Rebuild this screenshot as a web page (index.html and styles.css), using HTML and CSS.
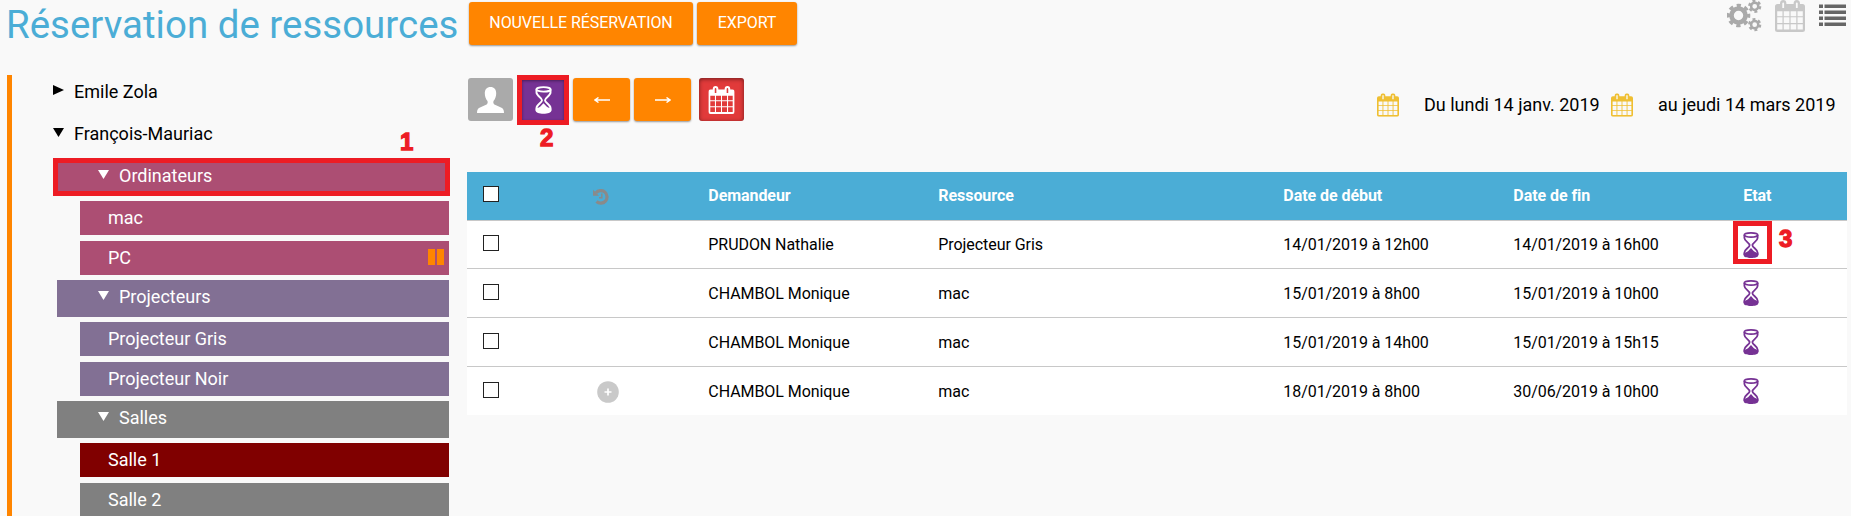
FILE: index.html
```html
<!DOCTYPE html>
<html lang="fr">
<head>
<meta charset="utf-8">
<title>Réservation de ressources</title>
<link rel="stylesheet" href="styles.css">
</head>
<body>
<svg class="defs" aria-hidden="true">
  <symbol id="calendar" viewBox="0 0 30 32">
    <path fill="currentColor" fill-rule="evenodd" d="M2.500 4H5V3.500a3.200 3.500 0 0 1 6.400 0V4h7.200V3.500a3.200 3.500 0 0 1 6.400 0V4h2.500A2.500 2.500 0 0 1 30 6.500v23a2.500 2.500 0 0 1-2.500 2.500h-25A2.500 2.500 0 0 1 0 29.500v-23A2.500 2.500 0 0 1 2.500 4zM7.300 3.300V8h1.800V3.300a.9.900 0 0 0-1.800 0zM20.900 3.300V8h1.800V3.300a.9.900 0 0 0-1.800 0zM2.200 11.200v5h5.300v-5zM8.700 11.200v5h5.700v-5zM15.600 11.200v5h5.700v-5zM22.500 11.200v5h5.300v-5zM2.200 17.300v5.700h5.300v-5.700zM8.700 17.300v5.700h5.700v-5.700zM15.600 17.300v5.700h5.700v-5.700zM22.500 17.300v5.700h5.300v-5.700zM2.200 24.200v5.400h5.300v-5.400zM8.700 24.200v5.400h5.700v-5.400zM15.600 24.200v5.400h5.700v-5.400zM22.500 24.200v5.400h5.300v-5.400z"/>
  </symbol>
  <symbol id="hourglass" viewBox="0 0 16 26">
    <g fill="none" stroke="currentColor" stroke-width="1.800">
      <ellipse cx="8" cy="3" rx="6.700" ry="2.100"/>
      <path d="M1.400 3v3c0 3 5.200 5 5.200 7.200S1.400 17.500 1.400 20.500V23M14.600 3v3c0 3-5.200 5-5.200 7.200s5.200 4.300 5.200 7.300V23"/>
    </g>
    <path fill="currentColor" d="M.7 21c1.800-.3 4.300-1.300 5.500-3L8 16l1.800 2c1.200 1.700 3.700 2.700 5.500 3v2.200C15.300 25 12 26 8 26S.7 25 .7 23.200z"/>
  </symbol>
</svg>

<header class="top">
  <h1 class="title">Réservation de ressources</h1>
  <button class="btn btn-new">NOUVELLE RÉSERVATION</button>
  <button class="btn btn-export">EXPORT</button>
  <nav class="views">
    <svg class="gears" viewBox="0 0 35 32" fill="none" stroke="currentColor">
      <circle cx="11.500" cy="15.500" r="7" stroke-width="4.600"/>
      <circle cx="11.500" cy="15.500" r="10" stroke-width="3.600" stroke-dasharray="4.200 3.654" stroke-dashoffset="2.100"/>
      <circle cx="27.700" cy="6.300" r="3.600" stroke-width="2.500"/>
      <circle cx="27.700" cy="6.300" r="5.400" stroke-width="2.400" stroke-dasharray="2.900 2.755"/>
      <circle cx="27.700" cy="24.700" r="3.600" stroke-width="2.500"/>
      <circle cx="27.700" cy="24.700" r="5.400" stroke-width="2.400" stroke-dasharray="2.900 2.755"/>
    </svg>
    <svg class="view-cal"><use href="#calendar"/></svg>
    <svg class="list" viewBox="0 0 27 22" fill="currentColor">
      <path d="M0 .5h4v3.500H0zM5.500.5H27v3.500H5.500zM0 6.500h4V10H0zM5.500 6.500H27V10H5.500zM0 12.500h4V16H0zM5.500 12.500H27V16H5.500zM0 18.500h4V22H0zM5.500 18.500H27V22H5.500z"/>
    </svg>
  </nav>
</header>

<div class="page">
  <aside class="tree">
    <div class="school"><i class="tri right"></i><span>Emile Zola</span></div>
    <div class="school"><i class="tri"></i><span>François-Mauriac</span></div>
    <div class="cat rose marked"><i class="tri"></i><span>Ordinateurs</span><b class="note note-1">1</b></div>
    <div class="item rose">mac</div>
    <div class="item rose">PC<i class="pause"></i></div>
    <div class="cat violet"><i class="tri"></i><span>Projecteurs</span></div>
    <div class="item violet">Projecteur Gris</div>
    <div class="item violet">Projecteur Noir</div>
    <div class="cat grey"><i class="tri"></i><span>Salles</span></div>
    <div class="item maroon">Salle 1</div>
    <div class="item grey">Salle 2</div>
  </aside>

  <main class="main">
    <div class="toolbar">
      <button class="tool tool-user"><svg viewBox="0 0 27 26"><path fill="currentColor" d="M13.500 0c3.700 0 5.700 2.400 5.700 6.300 0 3.200-1 5.800-2.700 7.700-.6 2 .2 3.400 2 4.100l5.500 2.300c2.200.9 3 2.600 3 5.600H0c0-3 .8-4.700 3-5.600l5.500-2.300c1.800-.7 2.600-2.100 2-4.100-1.700-1.900-2.700-4.500-2.700-7.700C7.800 2.400 9.800 0 13.500 0z"/></svg></button>
      <button class="tool tool-wait"><svg><use href="#hourglass"/></svg><b class="note note-2">2</b></button>
      <button class="tool tool-arrow"><svg viewBox="0 0 16 6"><path d="M16 3H1M4.500.5 1 3l3.500 2.500"/></svg></button>
      <button class="tool tool-arrow"><svg viewBox="0 0 16 6"><path d="M0 3h15M11.500.5 15 3l-3.500 2.500"/></svg></button>
      <button class="tool tool-cal"><svg viewBox="0 0 30 32"><use href="#calendar"/></svg></button>
      <div class="range">
        <svg viewBox="0 0 30 32"><use href="#calendar"/></svg><span class="from">Du lundi 14 janv. 2019</span>
        <svg viewBox="0 0 30 32"><use href="#calendar"/></svg><span class="to">au jeudi 14 mars 2019</span>
      </div>
    </div>

    <div class="table">
      <div class="row head">
        <i class="check"></i>
        <svg class="history" viewBox="0 0 16 16"><path d="M3 3.700A6.300 6.300 0 1 1 3.500 12.500" fill="none" stroke="currentColor" stroke-width="3.200"/><path d="M0 .8v6h6z" fill="currentColor"/><path d="M8.800 4.500v4.300H6" fill="none" stroke="currentColor" stroke-width="1.500"/></svg>
        <span>Demandeur</span><span>Ressource</span><span>Date de début</span><span>Date de fin</span><span>Etat</span>
      </div>
      <div class="row first"><i class="check"></i><i></i><span>PRUDON Nathalie</span><span>Projecteur Gris</span><span>14/01/2019 à 12h00</span><span>14/01/2019 à 16h00</span><span class="state state-marked"><svg><use href="#hourglass"/></svg><b class="note note-3">3</b></span></div>
      <div class="row"><i class="check"></i><i></i><span>CHAMBOL Monique</span><span>mac</span><span>15/01/2019 à 8h00</span><span>15/01/2019 à 10h00</span><span class="state"><svg><use href="#hourglass"/></svg></span></div>
      <div class="row"><i class="check"></i><i></i><span>CHAMBOL Monique</span><span>mac</span><span>15/01/2019 à 14h00</span><span>15/01/2019 à 15h15</span><span class="state"><svg><use href="#hourglass"/></svg></span></div>
      <div class="row"><i class="check"></i><svg class="plus" viewBox="0 0 22 22"><circle cx="11" cy="11" r="10.800" fill="#c9c9c9"/><path d="M7.500 11h7M11 7.500v7" stroke="#fff" stroke-width="1.700"/></svg><span>CHAMBOL Monique</span><span>mac</span><span>18/01/2019 à 8h00</span><span>30/06/2019 à 10h00</span><span class="state"><svg><use href="#hourglass"/></svg></span></div>
    </div>
  </main>
</div>
</body>
</html>
```

FILE: styles.css
```css
*, *::before { box-sizing: border-box; }
body {
  margin: 0;
  height: 516px;
  overflow: hidden;
  background: #f9f9f9;
  color: #000;
  font-family: Roboto, "Liberation Sans", sans-serif;
  font-size: 18px;
}
svg { display: block; }
.defs { position: absolute; width: 0; height: 0; }

.top { display: flex; align-items: flex-start; height: 75px; padding: 0 5px 0 6px; }
.title {
  width: 463px;
  margin: 0;
  color: #4badd6;
  font-size: 38.400px;
  font-weight: 400;
  letter-spacing: .04px;
  line-height: 50px;
  white-space: nowrap;
}
.btn {
  height: 43px;
  margin: 2px 4px 0 0;
  padding: 0 0 3px;
  border: 0;
  border-radius: 3px;
  background: #ff8500;
  box-shadow: 0 1px 2px rgba(0, 0, 0, .4);
  color: #fff;
  font: 16px Roboto, sans-serif;
  letter-spacing: -.08px;
}
.btn-new { width: 224px; }
.btn-export { width: 100px; }
.views { display: flex; margin-left: auto; color: #aaa; }
.gears { width: 35px; height: 32px; margin-right: 13px; }
.view-cal { width: 30px; height: 32px; margin-right: 14px; color: #c8c8c8; }
.list { width: 27px; height: 22px; margin-top: 4px; color: #666; }

.page { display: flex; height: 441px; padding-left: 7px; }
.tree { width: 442px; flex: none; border-left: 5px solid #ff8500; margin-right: 18px; }
.school { display: flex; height: 42px; padding: 6px 0 0 41px; line-height: 22px; }
.school .tri { margin-right: 10px; }
.tri {
  flex: none;
  width: 11px;
  height: 9px;
  margin-top: 5px;
  background: currentColor;
  clip-path: polygon(0 0, 100% 0, 50% 100%);
}
.tri.right { height: 10px; clip-path: polygon(0 0, 100% 50%, 0 100%); margin-top: 4px; }
.cat {
  position: relative;
  display: flex;
  height: 37px;
  margin: 0 0 5px 45px;
  padding: 6px 0 0 41px;
  color: #fff;
  line-height: 22px;
}
.cat .tri { margin-right: 10px; }
.marked::before {
  content: "";
  position: absolute;
  inset: -1px -1px 0 -4px;
  border: 5px solid #ed1c24;
}
.item {
  position: relative;
  height: 34px;
  margin: 0 0 6px 68px;
  padding-left: 28px;
  color: #fff;
  line-height: 33px;
}
.item:has(+ .cat) { margin-bottom: 5px; }
.rose { background: #ac4e73; }
.violet { background: #827094; }
.grey { background: #808080; }
.maroon { background: #800000; }
.pause {
  position: absolute;
  right: 5px;
  top: 8px;
  width: 16px;
  height: 16px;
  border: solid #ff8500;
  border-width: 0 7px;
}
.note {
  position: absolute;
  color: #ed1c24;
  font: 700 24px/24px "Liberation Sans", sans-serif;
  -webkit-text-stroke: 1.300px #ed1c24;
}
.note-1 { left: 343px; top: -29px; }
.note-2 { left: 18px; top: 46px; }
.note-3 { left: 47px; top: 6px; }

.main { width: 1380px; }
.tool {
  display: flex;
  align-items: center;
  justify-content: center;
  flex: none;
  width: 45px;
  height: 43px;
  margin-top: 3px;
  padding: 0;
  border: 0;
  border-radius: 3px;
  color: #fff;
}
.toolbar { display: flex; align-items: flex-start; height: 97px; padding-left: 1px; }
.tool-user { margin-right: 4px; background: #aaa; }
.tool-user svg { width: 27px; height: 26px; }
.tool-wait {
  position: relative;
  width: 52px;
  height: 50px;
  margin: 0 4px 0 0;
  border: 5px solid #ed1c24;
  border-radius: 0;
  background: #763294;
  box-shadow: inset 0 1px 3px rgba(0, 0, 0, .4);
}
.tool-wait svg { width: 17px; height: 28px; }
.tool-arrow { width: 57px; margin-right: 4px; background: #ff8500; box-shadow: 0 1px 2px rgba(0, 0, 0, .4); }
.tool-arrow svg { width: 16px; height: 6px; fill: none; stroke: #fff; stroke-width: 1.400; }
.tool-cal { margin-left: 4px; background: #e13a3a; box-shadow: inset 0 1px 4px rgba(0, 0, 0, .5); }
.tool-cal svg { width: 27px; height: 28px; }
.range { display: flex; align-items: center; margin: 18px 0 0 auto; height: 24px; white-space: nowrap; }
.range svg { width: 22px; height: 24px; color: #efbf32; }
.from { width: 187px; margin-left: 25px; }
.from, .to { line-height: 22px; margin-top: -1px; }
.to { width: 189px; margin-left: 25px; }

.row {
  display: grid;
  grid-template-columns: 1fr 1fr 2fr 3fr 2fr 2fr 1fr;
  height: 49px;
  border-top: 1px solid #c8c8c8;
  background: #fff;
  font-size: 16px;
  line-height: 49px;
}
.row.head { height: 48px; border: 0; background: #4badd6; color: #fff; font-weight: 700; line-height: 47px; }
.row.first { height: 48px; line-height: 47px; }
.row > span { padding-left: 11.300px; letter-spacing: -.06px; }
.check { width: 16px; height: 16px; margin: 15px 0 0 16px; border: 1px solid #222; background: #fff; }
.head .check, .first .check { margin-top: 14px; }
.history { width: 16px; height: 16px; margin: 17px 0 0 11px; color: #8a8a8a; }
.plus { width: 22px; height: 22px; margin: 14px 0 0 15px; }
.state { position: relative; color: #763294; }
.state svg { width: 16px; height: 26px; margin-top: 11px; }
.state-marked::before {
  content: "";
  position: absolute;
  left: 1px;
  top: 0;
  width: 39px;
  height: 43px;
  border: 5px solid #ed1c24;
}
```
